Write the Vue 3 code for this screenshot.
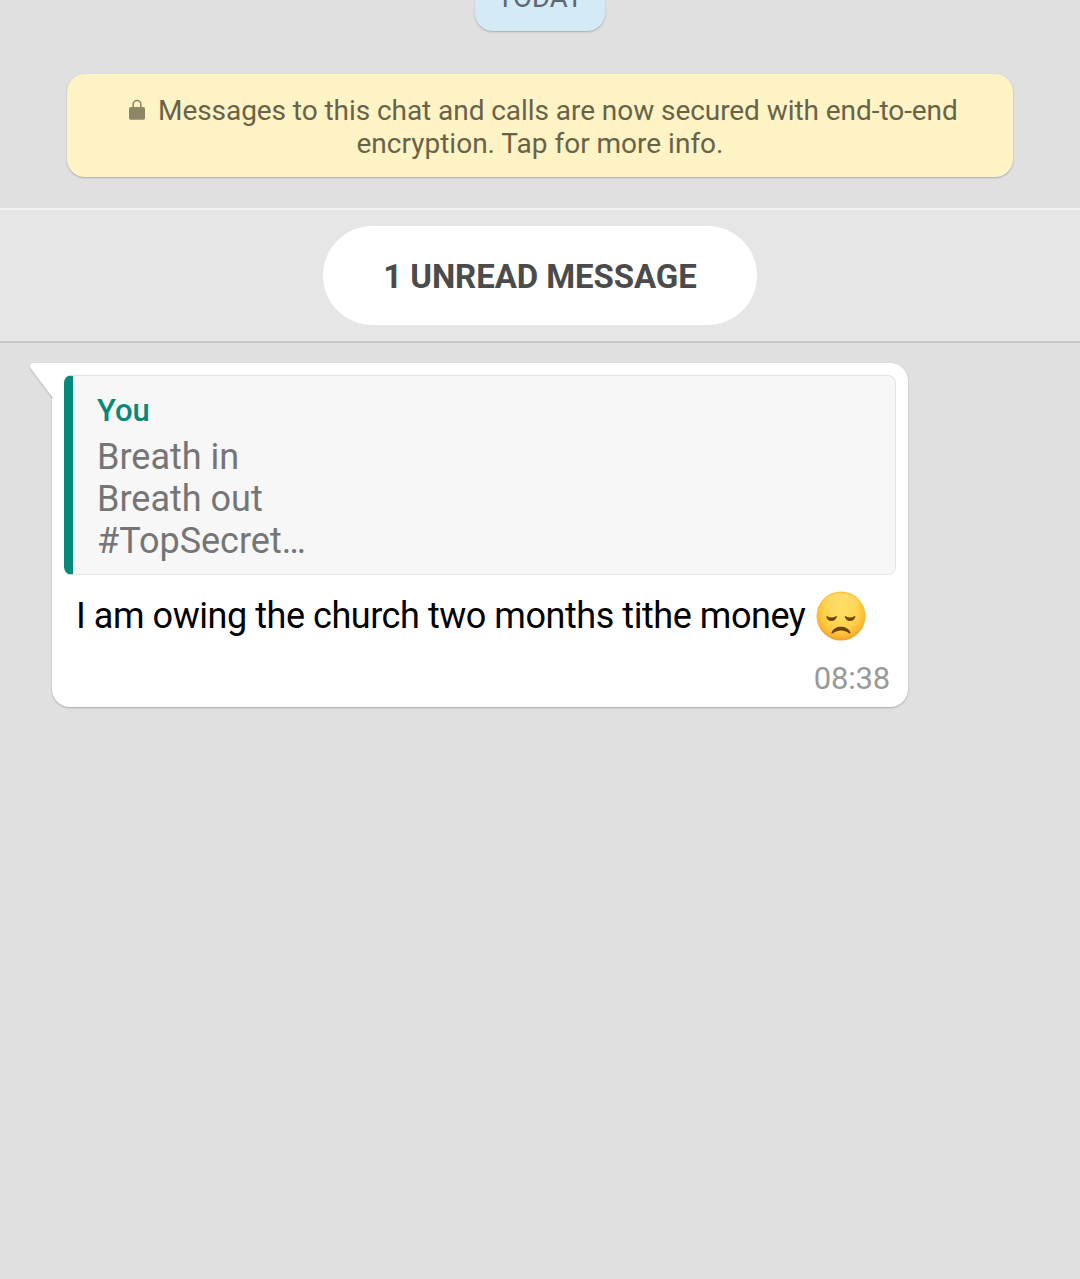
<script setup>
const quote = ['Breath in', 'Breath out', '#TopSecret…']
</script>

<template>
  <main class="chat">
    <div class="day"><span>TODAY</span></div>
    <section class="notice">
      <p class="first"><svg class="lock" viewBox="0 0 16 21"><path d="M4.200 10V5.300a3.800 3.800 0 0 1 7.600 0V10" fill="none" stroke="#8d8767" stroke-width="1.600"/><rect x="0" y="8" width="16" height="12.700" rx="1.800" fill="#8d8767"/></svg><span>Messages to this chat and calls are now secured with end-to-end</span></p>
      <p>encryption. Tap for more info.</p>
    </section>
    <section class="unread"><div class="pill"><span>1 UNREAD MESSAGE</span></div></section>
    <article class="bubble">
      <svg class="tail" viewBox="0 0 24 38"><path d="M24 0H4C.5 0-1.500 2.500.8 5.500L22 33.500H24Z" fill="#fff"/></svg>
      <div class="quote">
        <strong>You</strong>
        <p v-for="line in quote" :key="line"><span>{{ line }}</span></p>
      </div>
      <div class="message"><span>I am owing the church two months tithe money</span>
        <svg class="emoji" viewBox="0 0 50 50">
          <defs>
            <radialGradient id="face" cx=".5" cy=".42" r=".6"><stop offset="0" stop-color="#ffdf62"/><stop offset=".55" stop-color="#ffd24c"/><stop offset=".82" stop-color="#fbb935"/><stop offset="1" stop-color="#ec9624"/></radialGradient>
            <linearGradient id="shine" x1="0" y1="0" x2="0" y2="1"><stop offset="0" stop-color="#ffe98c" stop-opacity=".55"/><stop offset="1" stop-color="#ffe070" stop-opacity="0"/></linearGradient>
          </defs>
          <circle cx="25" cy="25" r="24.500" fill="url(#face)"/>
          <ellipse cx="25" cy="13" rx="18" ry="10.500" fill="url(#shine)"/>
          <g fill="#6b4209">
            <path d="M11 25q4.500 3.200 9.200 0q1 .2.5 1.400q-1.800 3.500-5.200 3.500t-5-3.500q-.3-1.200.5-1.400Z"/>
            <path d="M29.500 25q4.500 3.200 9.200 0q1 .2.5 1.400q-1.800 3.500-5.200 3.500t-5-3.500q-.3-1.200.5-1.400Z"/>
            <path d="M15.500 41.500C18.500 33.800 31.500 33.800 34.500 41.500C34.700 42.600 33.800 42.800 33 42.200C28 38.700 22 38.700 17 42.200C16.200 42.800 15.300 42.600 15.500 41.500Z"/>
          </g>
        </svg>
      </div>
      <time>08:38</time>
    </article>
  </main>
</template>

<style>
body { margin: 0; background: #e0e0e0; }
</style>
<style scoped>
.chat { height: 1279px; overflow: hidden; background: #e0e0e0; font-family: Roboto, sans-serif; }
.day { display: flow-root; width: 130px; height: 31px; margin: 0 auto; border-radius: 0 0 18px 18px; background: #d4eaf5; box-shadow: 0 1px 2px #aaa; color: #5d676c; font-size: 27.5px; text-align: center; line-height: 32px; }
.day span { display: block; margin-top: -18px; }
.notice { box-sizing: border-box; width: 946px; height: 103px; margin: 43px auto 0; padding-top: 20px; border-radius: 18px; background: #fef3c5; box-shadow: 0 1px 2px #aaa; color: #686348; }
p { margin: 0; }
.notice p { display: flex; justify-content: center; align-items: center; height: 33px; font-size: 28px; white-space: nowrap; }
.notice .first { justify-content: flex-start; padding-left: 62px; letter-spacing: -0.06px; }
.lock { width: 16px; height: 21px; margin: 0 13px 2px 0; }
.unread { box-sizing: border-box; height: 135px; margin-top: 31px; padding-top: 16px; border-top: 2px solid #f4f4f4; border-bottom: 2px solid #c8c8c8; background: #e6e6e6; }
.pill { width: 434px; height: 99px; margin: auto; border-radius: 50px; background: #fff; color: #4b4b4b; font-size: 33px; font-weight: 700; line-height: 101px; letter-spacing: -0.08px; text-align: center; }
.bubble { position: relative; box-sizing: border-box; width: 856px; height: 344px; margin: 20px 0 0 52px; padding: 12px; border-radius: 0 18px 18px 18px; background: #fff; box-shadow: 0 1px 2px #aaa; }
.tail { position: absolute; left: -22px; top: 0; width: 24px; height: 38px; overflow: visible; filter: drop-shadow(0 1px 1px #0003); clip-path: inset(-2px 0 -4px -4px); }
.quote { position: relative; box-sizing: border-box; height: 200px; padding: 16px 0 0 24px; border: 1px solid #e5e5e5; border-left: 9px solid #04897b; border-radius: 8px; background: #f7f7f7; color: #757575; font-size: 36px; line-height: 42px; }
.quote strong { display: block; color: #078979; font-size: 31px; font-weight: 500; line-height: 38px; height: 44px; }
.message { display: flex; align-items: center; height: 82px; padding-left: 12px; font-size: 36px; letter-spacing: -0.45px; white-space: nowrap; }
.emoji { width: 50px; height: 50px; margin-left: 11px; }
time { display: block; margin: 3px 6px 0; color: #999; text-align: right; font-size: 31px; letter-spacing: -0.2px; line-height: 38px; }
</style>
